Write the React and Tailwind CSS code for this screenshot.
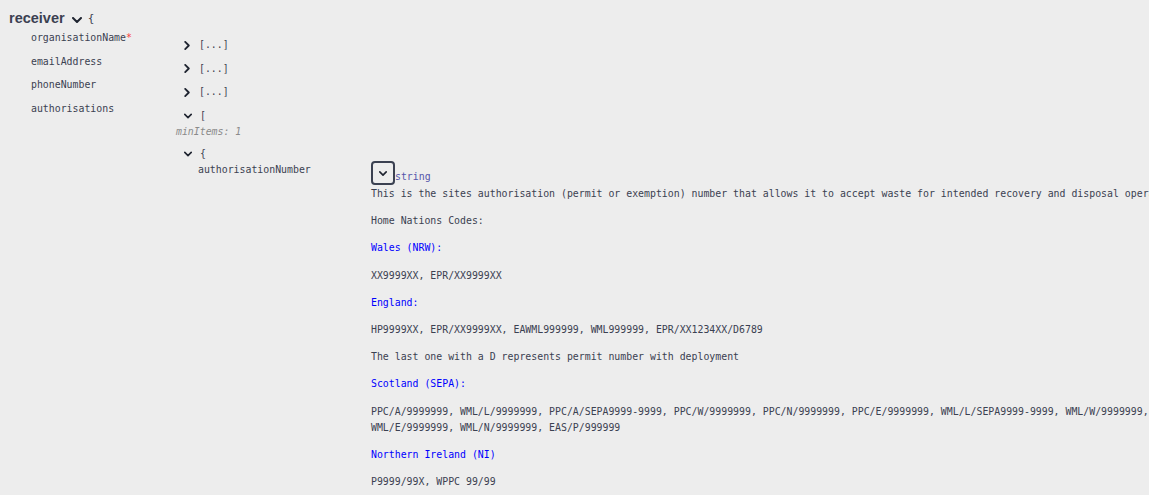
const mono = { fontFamily: '"DejaVu Sans Mono", "Liberation Mono", monospace' };

function ChevronDown({ className = 'w-[9px] h-[6px]' }) {
  return (
    <svg viewBox="0 0 10 6" className={className} fill="none">
      <polyline points="1,1 5,5 9,1" stroke="#1f2430" strokeWidth="2" strokeLinecap="round" strokeLinejoin="round" />
    </svg>
  );
}

function ChevronRight() {
  return (
    <svg viewBox="0 0 6 10" className="w-[6px] h-[9px]" fill="none">
      <polyline points="1,1 5,5 1,9" stroke="#1f2430" strokeWidth="2" strokeLinecap="round" strokeLinejoin="round" />
    </svg>
  );
}

function Collapsed() {
  return (
    <div className="ml-[8px] flex items-center h-[16px]">
      <ChevronRight />
      <span className="ml-[9px]">[...]</span>
    </div>
  );
}

const props = [
  { name: 'organisationName', required: true },
  { name: 'emailAddress' },
  { name: 'phoneNumber' },
];

export default function App() {
  return (
    <div className="h-[495px] w-full overflow-hidden bg-[#ededed] text-[#3b4151] text-[9.87px]" style={mono}>
      <div className="pl-[9px] pt-[10px]">
        <div className="flex items-center h-[18px]">
          <span className="text-[14.5px] font-bold" style={{ fontFamily: '"Liberation Sans", Arial, sans-serif' }}>receiver</span>
          <span className="ml-[7px] mt-[2px]"><ChevronDown className="w-[10px] h-[6px]" /></span>
          <span className="ml-[6px] text-[11px]">{'{'}</span>
        </div>

        <div className="ml-[22px] pt-[2px]">
          {props.map((p) => (
            <div key={p.name} className="flex">
              <div className="w-[145px] shrink-0 leading-[16px]">
                {p.name}
                {p.required && <span className="text-[#f93e3e]">*</span>}
              </div>
              <div className="h-[23.5px] pt-[7px] leading-[16px]">
                <Collapsed />
              </div>
            </div>
          ))}

          <div className="flex">
            <div className="w-[145px] shrink-0 leading-[16px]">authorisations</div>
            <div className="pt-[7px] leading-[16px]">
              <div className="ml-[8px] flex items-center h-[16px]">
                <ChevronDown className="w-[8px] h-[6px]" />
                <span className="ml-[8px]">[</span>
              </div>
              <div className="italic text-[#8a8a8a]">minItems: 1</div>

              <div className="mt-[6.5px] ml-[8px] flex items-center h-[16px]">
                <ChevronDown className="w-[8px] h-[6px]" />
                <span className="ml-[8px]">{'{'}</span>
              </div>

              <div className="flex">
                <div className="ml-[22px] w-[173px] shrink-0">authorisationNumber</div>
                <div className="-mt-[1px]">
                  <div className="flex items-end">
                    <button className="w-[24px] h-[24px] border-2 border-[#3b4151] rounded-[4px] flex items-center justify-center">
                      <ChevronDown className="w-[8px] h-[5px]" />
                    </button>
                    <span className="text-[#55a] leading-[16px]">string</span>
                  </div>
                  <div className="w-[840px] mt-[1px]">
                    <p className="mb-[11.2px]">This is the sites authorisation (permit or exemption) number that allows it to accept waste for intended recovery and disposal operations.</p>
                    <p className="mb-[11.2px]">Home Nations Codes:</p>
                    <p className="mb-[11.2px] text-[#0000ff]">Wales (NRW):</p>
                    <p className="mb-[11.2px]">XX9999XX, EPR/XX9999XX</p>
                    <p className="mb-[11.2px] text-[#0000ff]">England:</p>
                    <p className="mb-[11.2px]">HP9999XX, EPR/XX9999XX, EAWML999999, WML999999, EPR/XX1234XX/D6789</p>
                    <p className="mb-[11.2px]">The last one with a D represents permit number with deployment</p>
                    <p className="mb-[11.2px] text-[#0000ff]">Scotland (SEPA):</p>
                    <p className="mb-[11.2px]">PPC/A/9999999, WML/L/9999999, PPC/A/SEPA9999-9999, PPC/W/9999999, PPC/N/9999999, PPC/E/9999999, WML/L/SEPA9999-9999, WML/W/9999999, WML/E/9999999, WML/N/9999999, EAS/P/999999</p>
                    <p className="mb-[11.2px] text-[#0000ff]">Northern Ireland (NI)</p>
                    <p className="mb-[11.2px]">P9999/99X, WPPC 99/99</p>
                  </div>
                </div>
              </div>
            </div>
          </div>
        </div>
      </div>
    </div>
  );
}
